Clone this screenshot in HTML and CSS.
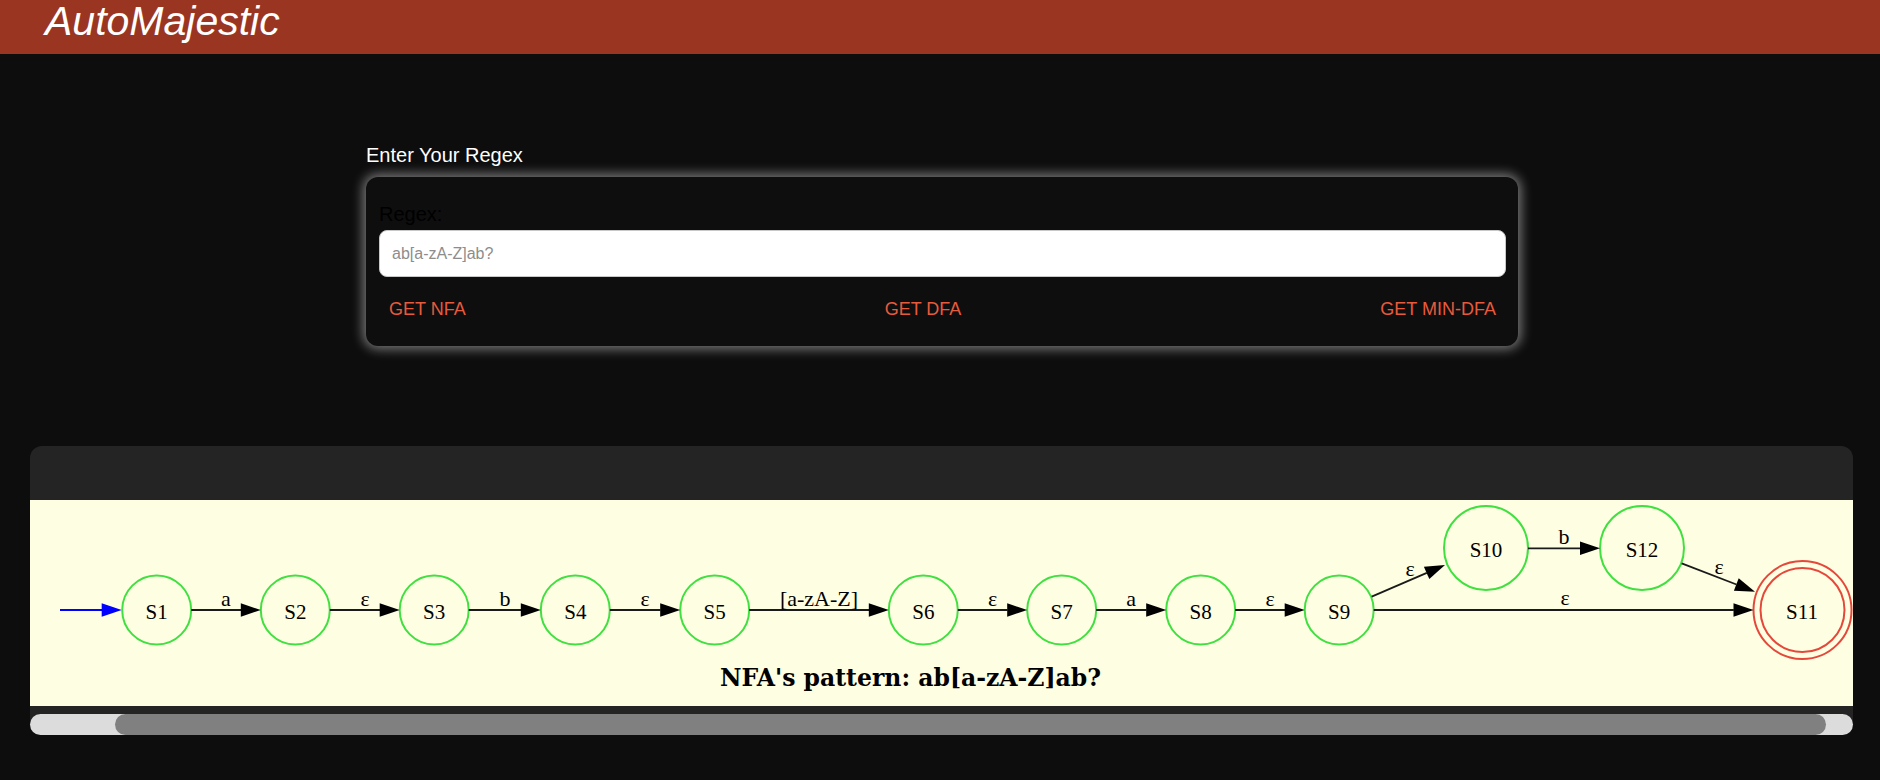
FILE: index.html
```html
<!DOCTYPE html>
<html lang="en">
<head>
<meta charset="utf-8">
<title>AutoMajestic</title>
<link rel="stylesheet" href="styles.css">
</head>
<body>
<header class="topbar">
  <h1 class="brand">AutoMajestic</h1>
</header>
<main class="main">
  <section class="regex-section">
    <h2 class="section-title">Enter Your Regex</h2>
    <div class="card">
      <label class="field-label" for="regex">Regex:</label>
      <input id="regex" class="field-input" type="text" placeholder="ab[a-zA-Z]ab?">
      <div class="actions">
        <button class="action" type="button">GET NFA</button>
        <button class="action" type="button">GET DFA</button>
        <button class="action" type="button">GET MIN-DFA</button>
      </div>
    </div>
  </section>

  <section class="graph-panel">
    <div class="graph-head"></div>
    <div class="graph-view">
      <svg class="graph" width="1823" height="206" viewBox="0 0 1823 206" xmlns="http://www.w3.org/2000/svg">
        <!-- start arrow -->
        <line class="start" x1="30" y1="110" x2="72" y2="110"/>
        <polygon class="start-head" points="71.7,103.3 91.7,110 71.7,116.7"/>

        <!-- nodes -->
        <circle class="node" cx="126.7" cy="110" r="34.5"/>
        <circle class="node" cx="265.3" cy="110" r="34.5"/>
        <circle class="node" cx="404.2" cy="110" r="34.5"/>
        <circle class="node" cx="545.3" cy="110" r="34.5"/>
        <circle class="node" cx="684.7" cy="110" r="34.5"/>
        <circle class="node" cx="893.3" cy="110" r="34.5"/>
        <circle class="node" cx="1031.7" cy="110" r="34.5"/>
        <circle class="node" cx="1170.7" cy="110" r="34.5"/>
        <circle class="node" cx="1309.2" cy="110" r="34.5"/>
        <circle class="node" cx="1456" cy="48" r="42"/>
        <circle class="node" cx="1612" cy="48" r="42"/>
        <circle class="final" cx="1772.5" cy="110" r="49"/>
        <circle class="final" cx="1772.5" cy="110" r="42"/>

        <text class="nlabel" x="126.7" y="118.5">S1</text>
        <text class="nlabel" x="265.3" y="118.5">S2</text>
        <text class="nlabel" x="404.2" y="118.5">S3</text>
        <text class="nlabel" x="545.3" y="118.5">S4</text>
        <text class="nlabel" x="684.7" y="118.5">S5</text>
        <text class="nlabel" x="893.3" y="118.5">S6</text>
        <text class="nlabel" x="1031.7" y="118.5">S7</text>
        <text class="nlabel" x="1170.7" y="118.5">S8</text>
        <text class="nlabel" x="1309.2" y="118.5">S9</text>
        <text class="nlabel" x="1456" y="56.5">S10</text>
        <text class="nlabel" x="1612" y="56.5">S12</text>
        <text class="nlabel" x="1772" y="118.5">S11</text>

        <!-- straight edges -->
        <line class="edge" x1="161.2" y1="110" x2="211" y2="110"/>
        <polygon class="head" points="210.8,103.3 230.8,110 210.8,116.7"/>
        <text class="elabel" x="196" y="105.7">a</text>

        <line class="edge" x1="299.8" y1="110" x2="350" y2="110"/>
        <polygon class="head" points="349.7,103.3 369.7,110 349.7,116.7"/>
        <text class="elabel" x="335" y="105.7">ε</text>

        <line class="edge" x1="438.7" y1="110" x2="491" y2="110"/>
        <polygon class="head" points="490.8,103.3 510.8,110 490.8,116.7"/>
        <text class="elabel" x="475" y="105.7">b</text>

        <line class="edge" x1="579.8" y1="110" x2="630.5" y2="110"/>
        <polygon class="head" points="630.2,103.3 650.2,110 630.2,116.7"/>
        <text class="elabel" x="615" y="105.7">ε</text>

        <line class="edge" x1="719.2" y1="110" x2="839" y2="110"/>
        <polygon class="head" points="838.8,103.3 858.8,110 838.8,116.7"/>
        <text class="elabel" x="789" y="106">[a-zA-Z]</text>

        <line class="edge" x1="927.8" y1="110" x2="977.5" y2="110"/>
        <polygon class="head" points="977.2,103.3 997.2,110 977.2,116.7"/>
        <text class="elabel" x="962.5" y="105.7">ε</text>

        <line class="edge" x1="1066.2" y1="110" x2="1116.5" y2="110"/>
        <polygon class="head" points="1116.2,103.3 1136.2,110 1116.2,116.7"/>
        <text class="elabel" x="1101.2" y="105.7">a</text>

        <line class="edge" x1="1205.2" y1="110" x2="1255" y2="110"/>
        <polygon class="head" points="1254.7,103.3 1274.7,110 1254.7,116.7"/>
        <text class="elabel" x="1240" y="105.7">ε</text>

        <!-- S9 -> S10 -->
        <line class="edge" x1="1341.7" y1="96.7" x2="1396.8" y2="72.9"/>
        <polygon class="head" points="1399.3,79.1 1415,65 1393.9,66.8"/>
        <text class="elabel" x="1380" y="76">ε</text>

        <!-- S10 -> S12 -->
        <line class="edge" x1="1498" y1="48.3" x2="1550.3" y2="48.3"/>
        <polygon class="head" points="1550,41.6 1570,48.3 1550,55"/>
        <text class="elabel" x="1534" y="44.3">b</text>

        <!-- S12 -> S11 -->
        <line class="edge" x1="1651.7" y1="63.3" x2="1706.5" y2="84.5"/>
        <polygon class="head" points="1703.9,90.8 1725,91.7 1708.7,78.3"/>
        <text class="elabel" x="1689" y="74">ε</text>

        <!-- S9 -> S11 -->
        <line class="edge" x1="1343.7" y1="110" x2="1703.8" y2="110"/>
        <polygon class="head" points="1703.5,103.3 1723.5,110 1703.5,116.7"/>
        <text class="elabel" x="1535" y="105">ε</text>

        <text class="caption" x="880.5" y="186">NFA's pattern: ab[a-zA-Z]ab?</text>
      </svg>
    </div>
    <div class="graph-gap"></div>
    <div class="scroll-track"><div class="scroll-thumb"></div></div>
  </section>
</main>
</body>
</html>
```

FILE: styles.css
```css
html, body {
  margin: 0;
  padding: 0;
}

body {
  background: #0d0d0d;
  font-family: "Liberation Sans", Arial, sans-serif;
  color: #fff;
}

.topbar {
  height: 54px;
  background: #9a3522;
  padding-left: 45px;
  display: flex;
  align-items: flex-start;
}

.brand {
  margin: 0;
  font-size: 41px;
  line-height: 42px;
  font-style: italic;
  font-weight: normal;
  color: #fff;
}

.main {
  display: flex;
  flex-direction: column;
}

.regex-section {
  margin: 90px 0 0 366px;
  width: 1152px;
}

.section-title {
  margin: 0 0 10px;
  font-size: 20px;
  line-height: 23px;
  font-weight: normal;
  color: #fff;
}

.card {
  background: #0e0e0e;
  border-radius: 12px;
  box-shadow: 0 0 12px 3px rgba(255, 255, 255, 0.45);
  padding: 26px 12px 20px 13px;
  display: flex;
  flex-direction: column;
}

.field-label {
  display: block;
  font-size: 20px;
  line-height: 23px;
  color: #000;
  margin-bottom: 4px;
}

.field-input {
  display: block;
  width: 100%;
  box-sizing: border-box;
  height: 47px;
  border: 1px solid #c8c8c8;
  border-radius: 8px;
  padding: 0 12px;
  background: #fff;
  font-family: "Liberation Sans", Arial, sans-serif;
  font-size: 16px;
  color: #222;
  outline: none;
}

.field-input::placeholder {
  color: #8d8d8d;
}

.actions {
  display: flex;
  justify-content: space-between;
  margin-top: 16px;
}

.action {
  background: none;
  border: 0;
  padding: 6px 10px;
  font-family: "Liberation Sans", Arial, sans-serif;
  font-size: 18px;
  line-height: normal;
  color: #e85a3c;
  cursor: pointer;
}

.graph-panel {
  margin: 100px 0 0 30px;
  width: 1823px;
  background: #252425;
  border-radius: 12px 12px 10.5px 10.5px;
  display: flex;
  flex-direction: column;
}

.graph-head {
  height: 54px;
}

.graph-view {
  height: 206px;
  background: #fefee2;
  overflow: hidden;
}

.graph {
  display: block;
}

.graph-gap {
  height: 8px;
}

.scroll-track {
  height: 21px;
  background: #dcdcdc;
  border-radius: 10.5px;
  display: flex;
}

.scroll-thumb {
  margin-left: 85px;
  width: 1711px;
  height: 21px;
  background: #808080;
  border-radius: 10.5px;
}

.start {
  stroke: #0000ff;
  stroke-width: 1.8;
}

.start-head {
  fill: #0000ff;
}

.node {
  fill: none;
  stroke: #40e040;
  stroke-width: 2;
}

.final {
  fill: none;
  stroke: #e5483b;
  stroke-width: 2;
}

.edge {
  stroke: #1a1a1a;
  stroke-width: 1.8;
}

.head {
  fill: #000;
}

.nlabel {
  font-family: "Liberation Serif", "Times New Roman", serif;
  font-size: 21px;
  text-anchor: middle;
  fill: #000;
}

.elabel {
  font-family: "Liberation Serif", "Times New Roman", serif;
  font-size: 22px;
  text-anchor: middle;
  fill: #000;
}

.caption {
  font-family: "DejaVu Serif", serif;
  font-weight: bold;
  font-size: 23.5px;
  text-anchor: middle;
  fill: #000;
}
```
